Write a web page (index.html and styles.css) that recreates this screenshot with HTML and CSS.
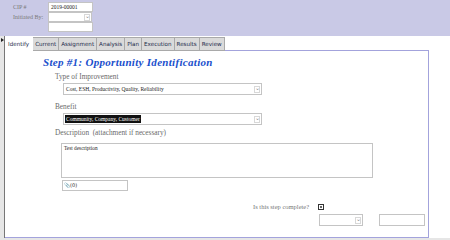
FILE: index.html
```html
<!DOCTYPE html>
<html lang="en">
<head>
    <meta charset="UTF-8">
    <title>CIP - Identify</title>
    <link rel="stylesheet" href="styles.css">
</head>
<body>
    <header class="cip-header">
        <div class="field-row">
            <span class="field-label">CIP #</span>
            <div class="box box-input">2019-00001</div>
        </div>
        <div class="field-row">
            <span class="field-label">Initiated By:</span>
            <div class="box box-select small-select"><span class="chev">&#8964;</span></div>
        </div>
        <div class="field-row">
            <span class="field-label"></span>
            <div class="box box-input"></div>
        </div>
    </header>

    <main class="cip-main">
        <div class="gutter">
            <span class="row-marker"></span>
        </div>
        <div class="tab-area">
            <nav class="tabs">
                <span class="tab active">Identify</span>
                <span class="tab">Current</span>
                <span class="tab">Assignment</span>
                <span class="tab">Analysis</span>
                <span class="tab">Plan</span>
                <span class="tab">Execution</span>
                <span class="tab">Results</span>
                <span class="tab">Review</span>
            </nav>
            <section class="panel">
                <h1 class="step-title">Step #1: Opportunity Identification</h1>
                <div class="form-body">
                    <div class="q-label">Type of Improvement</div>
                    <div class="box box-select wide-select">
                        <span class="val">Cost, ESH, Productivity, Quality, Reliability</span>
                        <span class="chev">&#8964;</span>
                    </div>

                    <div class="q-label gap-benefit">Benefit</div>
                    <div class="box box-select wide-select">
                        <span class="val selected">Community, Company, Customer</span>
                        <span class="chev">&#8964;</span>
                    </div>

                    <div class="q-label gap-desc">Description&nbsp; (attachment if necessary)</div>
                    <div class="box desc-area">Test description</div>
                    <div class="box attach-box"><span class="clip">&#128206;</span>(0)</div>

                    <div class="complete-row">
                        <span class="complete-label">Is this step complete?</span>
                        <span class="check"></span>
                    </div>
                    <div class="signoff-row">
                        <div class="box box-select signoff-select"><span class="chev">&#8964;</span></div>
                        <div class="box signoff-input"></div>
                    </div>
                </div>
            </section>
        </div>
    </main>
    <div class="bottom-strip"></div>
</body>
</html>
```

FILE: styles.css
```css
* {
    margin: 0;
    padding: 0;
    box-sizing: border-box;
}

body {
    font-family: 'Liberation Serif', 'Times New Roman', serif;
    background: #ffffff;
    width: 450px;
    height: 240px;
    overflow: hidden;
}

.cip-header {
    background: #c9c9e6;
    height: 36px;
    padding: 2px 0 0 13px;
}

.field-row {
    display: flex;
    align-items: center;
    height: 10px;
}

.field-label {
    width: 35px;
    font-size: 6px;
    color: #7a7a7a;
}

.box {
    background: #fff;
    border: 1px solid #c4c4c4;
    font-size: 5.5px;
    color: #222;
}

.box-input {
    width: 45px;
    height: 10px;
    line-height: 8px;
    padding-left: 2px;
}

.box-select {
    position: relative;
    display: flex;
    align-items: center;
}

.small-select {
    width: 44px;
    height: 10px;
}

.chev {
    position: absolute;
    right: 1px;
    top: 1px;
    width: 6px;
    height: 7px;
    border: 1px solid #d8d8d8;
    font-size: 6px;
    line-height: 3px;
    text-align: center;
    color: #888;
}

.cip-main {
    display: flex;
    height: 202px;
}

.gutter {
    width: 5px;
    background: #e6e6e6;
    border-right: 1px solid #777;
    padding-top: 2px;
}

.row-marker {
    display: block;
    width: 0;
    height: 0;
    margin-left: 1px;
    border-top: 2px solid transparent;
    border-bottom: 2px solid transparent;
    border-left: 3px solid #222;
}

.tab-area {
    width: 424px;
    display: flex;
    flex-direction: column;
}

.tabs {
    display: flex;
    height: 14px;
    padding-top: 1px;
    position: relative;
    z-index: 1;
}

.tab {
    font-family: 'DejaVu Sans', Tahoma, sans-serif;
    font-size: 5.6px;
    color: #1c2a4a;
    background: #dadada;
    border: 1px solid #a9a9a9;
    border-left: 0;
    padding: 0 2px;
    line-height: 12px;
    height: 14px;
}

.tab.active {
    background: #fff;
    border-color: #fff;
    padding: 0 3px;
}

.panel {
    flex: 1;
    border: 1px solid #a3a3dc;
    border-left: 0;
    padding: 6px 0 0 38px;
}

.step-title {
    font-size: 11px;
    letter-spacing: 0.3px;
    font-weight: bold;
    font-style: italic;
    color: #1a4fcc;
    line-height: 11px;
}

.form-body {
    padding-left: 12px;
}

.q-label {
    font-size: 7.3px;
    color: #6a6a6a;
    margin-top: 4px;
    line-height: 9px;
}

.gap-benefit {
    margin-top: 7px;
}

.gap-desc {
    margin-top: 3px;
}

.wide-select {
    width: 199px;
    height: 12px;
    margin: 2px 0 0 8px;
    padding-left: 2px;
}

.wide-select .chev {
    top: 2px;
}

.val {
    font-size: 5.5px;
    line-height: 8px;
}

.selected {
    background: #111;
    color: #fff;
    padding: 0 1px;
    margin-left: -1px;
}

.desc-area {
    width: 312px;
    height: 35px;
    margin: 6px 0 0 6px;
    padding: 1px 2px;
    font-size: 5.3px;
    line-height: 7px;
}

.attach-box {
    width: 66px;
    height: 11px;
    margin: 2px 0 0 7px;
    font-family: 'DejaVu Sans', sans-serif;
    font-size: 5px;
    line-height: 9px;
    padding-left: 1px;
}

.clip {
    font-size: 5px;
    color: #888;
}

.complete-row {
    display: flex;
    align-items: center;
    margin: 12px 0 0 198px;
}

.complete-label {
    font-size: 6.5px;
    color: #777;
}

.check {
    width: 6px;
    height: 6px;
    margin-left: 9px;
    border: 1px solid #333;
    background: #666;
    box-shadow: inset 0 0 0 1px #fff;
}

.signoff-row {
    display: flex;
    margin: 4px 0 0 264px;
    gap: 16px;
}

.signoff-select {
    width: 44px;
    height: 12px;
}

.signoff-select .chev {
    top: 2px;
}

.signoff-input {
    width: 46px;
    height: 12px;
}

.bottom-strip {
    height: 2px;
    background: #e6e6e6;
}
```
